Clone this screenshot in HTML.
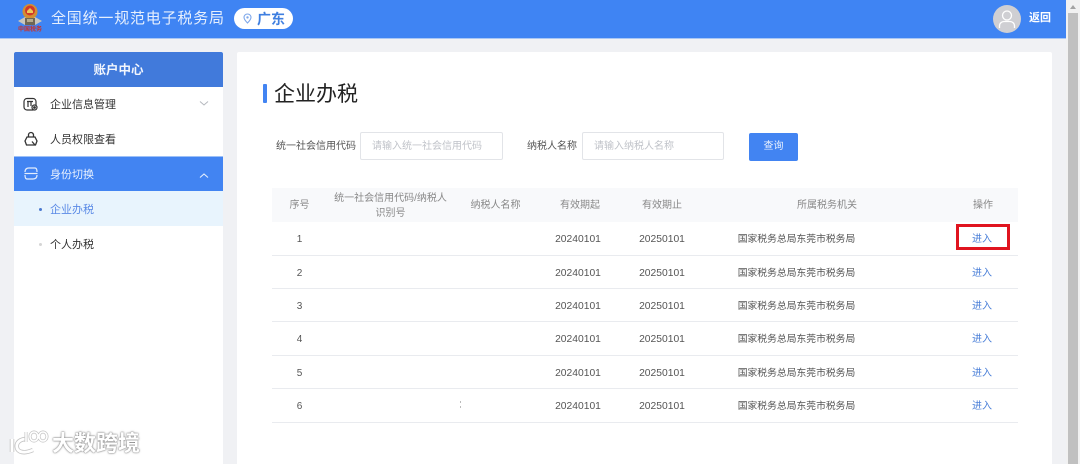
<!DOCTYPE html>
<html><head><meta charset="utf-8">
<style>
html,body{margin:0;padding:0;width:1080px;height:464px;overflow:hidden;background:#f0f1f4;font-family:"Liberation Sans","Noto Sans CJK SC",sans-serif;}
.a{position:absolute;white-space:nowrap;}
.c{text-align:center;}
#t div{position:absolute;white-space:nowrap;font-size:10px;line-height:14px;color:#555;text-align:center;}
#t div.h{color:#888;}
#t div.d{font-size:10.300px;margin-top:1px;}
#t div.b{font-size:9.800px;}
#t div.l{color:#4a7fd8;}
.line{position:absolute;left:272px;width:746px;height:1px;background:#e9ebef;}
#w{position:absolute;left:0;top:0;width:1080px;height:464px;filter:blur(.3px);}
</style></head><body>
<div id="w">
<div class="a" style="left:0;top:0;width:1066px;height:38px;background:#3f84f3;border-bottom:1px solid #a9c7f5;"></div>
<!-- logo -->
<svg class="a" style="left:17px;top:2px" width="26" height="26" viewBox="0 0 26 26">
<path d="M1 19 L8 15 L18 15 L25 19 L18 23 L8 23Z" fill="#c9c6bc"/>
<circle cx="13" cy="9.500" r="7.500" fill="#d28f33"/>
<circle cx="13" cy="8.500" r="5" fill="#d1372b"/>
<path d="M10 9l3-3 3 3v2h-6z" fill="#efc956"/>
<rect x="8" y="16" width="10" height="7" fill="#6f6754"/>
<rect x="10" y="17" width="6" height="3" fill="#b8ac8e"/>
</svg>
<div class="a c" style="left:17px;top:26px;width:26px;font-size:6px;line-height:8px;font-weight:bold;color:#c8322b;">中国税务</div>
<div class="a" style="left:51px;top:9px;font-size:15px;letter-spacing:.8px;line-height:20px;color:#e6effd;">全国统一规范电子税务局</div>
<div class="a" style="left:234px;top:8px;width:59px;height:21px;border-radius:11px;background:#fff;"></div>
<svg class="a" style="left:243px;top:13px" width="9" height="11" viewBox="0 0 9 11"><path d="M4.500 1C2.500 1 1 2.500 1 4.400 1 6.500 3 8.500 4.500 10 6 8.500 8 6.500 8 4.400 8 2.500 6.500 1 4.500 1Z" fill="none" stroke="#7da7ea" stroke-width="1.100"/><circle cx="4.500" cy="4.400" r="1.200" fill="#7da7ea"/></svg>
<div class="a" style="left:257px;top:10px;font-size:14px;line-height:18px;font-weight:bold;color:#3f7fe0;">广东</div>
<svg class="a" style="left:993px;top:5px" width="28" height="28" viewBox="0 0 28 28"><circle cx="14" cy="14" r="14" fill="#cfcfd3"/><circle cx="14" cy="10.500" r="4.500" fill="none" stroke="#fff" stroke-width="1.300"/><path d="M6.500 23v-2c0-3 2.500-4.500 4.500-4.500h6c2 0 4.500 1.500 4.500 4.500v2" fill="none" stroke="#fff" stroke-width="1.300"/></svg>
<div class="a" style="left:1029px;top:11px;font-size:11px;line-height:15px;font-weight:bold;color:#fff;">返回</div>
<!-- scrollbar -->
<div class="a" style="left:1066px;top:0;width:14px;height:464px;background:#f1f1f1;"></div>
<div class="a" style="left:1068px;top:13px;width:10px;height:451px;background:#c0c0c0;"></div>
<div class="a" style="left:1070px;top:5px;width:0;height:0;border-left:3px solid transparent;border-right:3px solid transparent;border-bottom:4px solid #a3a3a3;"></div>
<!-- sidebar -->
<div class="a" style="left:14px;top:52px;width:209px;height:412px;background:#fff;"></div>
<div class="a c" style="left:14px;top:52px;width:209px;height:35px;line-height:36px;background:#417adb;border-radius:2px 2px 0 0;color:#f2f6fd;font-size:12.500px;font-weight:bold;">账户中心</div>
<svg class="a" style="left:23px;top:97px" width="16" height="15" viewBox="0 0 16 15" fill="none" stroke="#333" stroke-width="1.200"><rect x="1" y="1.500" width="12" height="11.500" rx="3"/><path d="M5 5v5M8 5v4M4 4.500h6"/><circle cx="11.500" cy="10.500" r="2.500" fill="#fff"/><circle cx="11.500" cy="10.500" r=".8" fill="#333"/></svg>
<div class="a" style="left:50px;top:97px;font-size:11px;line-height:16px;color:#333;">企业信息管理</div>
<svg class="a" style="left:199px;top:100px" width="10" height="7" viewBox="0 0 10 7"><path d="M1 1.500L5 5 9 1.500" fill="none" stroke="#b5b8be" stroke-width="1"/></svg>
<svg class="a" style="left:23px;top:131px" width="16" height="16" viewBox="0 0 16 16" fill="none" stroke="#333" stroke-width="1.300"><path d="M5.500 6V4a2.500 2.500 0 0 1 5 0V6"/><path d="M4 6h8l2 4-1.500 4H3.500L2 10z"/><path d="M9 10.500l3 3.500"/></svg>
<div class="a" style="left:50px;top:132px;font-size:11px;line-height:16px;color:#333;">人员权限查看</div>
<div class="a" style="left:14px;top:156px;width:209px;height:35px;background:#4284f2;border-top:1px solid #9cc0f7;box-sizing:border-box;"></div>
<svg class="a" style="left:23px;top:166px" width="16" height="15" viewBox="0 0 16 15" fill="none" stroke="#e4eefd" stroke-width="1.200"><path d="M2 6C2 3 4 2 6 2h6c1.500 0 2 2 2 4"/><path d="M14 9c0 3-2 4-4 4H4c-1.500 0-2-2-2-4"/><path d="M1.500 7.500h13"/></svg>
<div class="a" style="left:50px;top:167px;font-size:11px;line-height:16px;color:#e9f1fe;">身份切换</div>
<svg class="a" style="left:199px;top:172px" width="10" height="7" viewBox="0 0 10 7"><path d="M1 5.500L5 2 9 5.500" fill="none" stroke="#e4eefd" stroke-width="1.100"/></svg>
<div class="a" style="left:14px;top:191px;width:209px;height:35px;background:#e8f4fd;"></div>
<div class="a" style="left:39px;top:208px;width:3px;height:3px;border-radius:50%;background:#4a78d0;"></div>
<div class="a" style="left:50px;top:202px;font-size:11px;line-height:16px;color:#5b8ae6;">企业办税</div>
<div class="a" style="left:39px;top:243px;width:3px;height:3px;border-radius:50%;background:#d5d5d5;"></div>
<div class="a" style="left:50px;top:237px;font-size:11px;line-height:16px;color:#333;">个人办税</div>
<!-- main panel -->
<div class="a" style="left:237px;top:52px;width:815px;height:412px;background:#fff;border-radius:2px 2px 0 0;"></div>
<div class="a" style="left:263px;top:84px;width:4px;height:19px;border-radius:1px;background:#4284f2;"></div>
<div class="a" style="left:274px;top:82px;font-size:21px;line-height:26px;color:#222;">企业办税</div>
<div class="a" style="left:276px;top:139px;font-size:10px;line-height:16px;color:#555;">统一社会信用代码</div>
<div class="a" style="left:360px;top:132px;width:143px;height:28px;box-sizing:border-box;border:1px solid #e2e4e8;border-radius:2px;background:#fff;"></div>
<div class="a" style="left:372px;top:139px;font-size:10px;line-height:16px;color:#c0c3c9;">请输入统一社会信用代码</div>
<div class="a" style="left:527px;top:139px;font-size:10px;line-height:16px;color:#555;">纳税人名称</div>
<div class="a" style="left:582px;top:132px;width:142px;height:28px;box-sizing:border-box;border:1px solid #e2e4e8;border-radius:2px;background:#fff;"></div>
<div class="a" style="left:594px;top:139px;font-size:10px;line-height:16px;color:#c0c3c9;">请输入纳税人名称</div>
<div class="a c" style="left:749px;top:133px;width:49px;height:28px;line-height:28px;border-radius:2px;background:#4284f2;color:#e9f1fe;font-size:10px;">查询</div>
<!-- table -->
<div class="a" style="left:272px;top:188px;width:746px;height:34px;background:#f8f9fb;"></div>
<div id="t">
<div class="h" style="left:272px;top:199px;width:55px;">序号</div>
<div class="h" style="left:327px;top:191px;width:127px;line-height:15px;">统一社会信用代码/纳税人<br>识别号</div>
<div class="h" style="left:460px;top:199px;width:71px;">纳税人名称</div>
<div class="h" style="left:545px;top:199px;width:70px;">有效期起</div>
<div class="h" style="left:627px;top:199px;width:70px;">有效期止</div>
<div class="h" style="left:767px;top:199px;width:120px;">所属税务机关</div>
<div class="h" style="left:953px;top:199px;width:60px;">操作</div>

<div style="left:272px;top:233px;width:55px;">1</div>
<div class="d" style="left:543px;top:232px;width:70px;">20240101</div>
<div class="d" style="left:627px;top:232px;width:70px;">20250101</div>
<div class="b" style="left:736.500px;top:233px;width:120px;">国家税务总局东莞市税务局</div>
<div class="l" style="left:952px;top:233px;width:60px;">进入</div>

<div style="left:272px;top:267px;width:55px;">2</div>
<div class="d" style="left:543px;top:266px;width:70px;">20240101</div>
<div class="d" style="left:627px;top:266px;width:70px;">20250101</div>
<div class="b" style="left:736.500px;top:267px;width:120px;">国家税务总局东莞市税务局</div>
<div class="l" style="left:952px;top:267px;width:60px;">进入</div>

<div style="left:272px;top:300px;width:55px;">3</div>
<div class="d" style="left:543px;top:299px;width:70px;">20240101</div>
<div class="d" style="left:627px;top:299px;width:70px;">20250101</div>
<div class="b" style="left:736.500px;top:300px;width:120px;">国家税务总局东莞市税务局</div>
<div class="l" style="left:952px;top:300px;width:60px;">进入</div>

<div style="left:272px;top:333px;width:55px;">4</div>
<div class="d" style="left:543px;top:332px;width:70px;">20240101</div>
<div class="d" style="left:627px;top:332px;width:70px;">20250101</div>
<div class="b" style="left:736.500px;top:333px;width:120px;">国家税务总局东莞市税务局</div>
<div class="l" style="left:952px;top:333px;width:60px;">进入</div>

<div style="left:272px;top:367px;width:55px;">5</div>
<div class="d" style="left:543px;top:366px;width:70px;">20240101</div>
<div class="d" style="left:627px;top:366px;width:70px;">20250101</div>
<div class="b" style="left:736.500px;top:367px;width:120px;">国家税务总局东莞市税务局</div>
<div class="l" style="left:952px;top:367px;width:60px;">进入</div>

<div style="left:272px;top:400px;width:55px;">6</div>
<div class="d" style="left:543px;top:399px;width:70px;">20240101</div>
<div class="d" style="left:627px;top:399px;width:70px;">20250101</div>
<div class="b" style="left:736.500px;top:400px;width:120px;">国家税务总局东莞市税务局</div>
<div class="l" style="left:952px;top:400px;width:60px;">进入</div>
</div>
<div class="a" style="left:460px;top:401px;width:1px;height:2px;background:#bbb;"></div>
<div class="a" style="left:460px;top:406px;width:1px;height:2px;background:#bbb;"></div>
<div class="line" style="top:255px"></div>
<div class="line" style="top:288px"></div>
<div class="line" style="top:321px"></div>
<div class="line" style="top:355px"></div>
<div class="line" style="top:388px"></div>
<div class="line" style="top:422px"></div>
<div class="a" style="left:956px;top:224px;width:54px;height:26px;box-sizing:border-box;border:3px solid #e0141f;"></div>
<!-- watermark -->
<svg class="a" style="left:8px;top:430px" width="44" height="28" viewBox="0 0 44 28" fill="none">
<g stroke="#c4c4c4" stroke-width="4.500">
<path d="M4 9V22"/>
<path d="M17 9C10 10 8 14 9 18c1 4 7 6 16 2"/>
</g>
<g stroke="#fff" stroke-width="2.800">
<path d="M4 9V22"/>
<path d="M17 9C10 10 8 14 9 18c1 4 7 6 16 2"/>
</g>
<g stroke="#c4c4c4" stroke-width="3">
<path d="M18 2v10"/><ellipse cx="26" cy="6.500" rx="4" ry="4.500"/><ellipse cx="35" cy="6.500" rx="4" ry="4.500"/>
</g>
<g stroke="#fff" stroke-width="1.600">
<path d="M18 2v10"/><ellipse cx="26" cy="6.500" rx="4" ry="4.500"/><ellipse cx="35" cy="6.500" rx="4" ry="4.500"/>
</g>
</svg>
<div class="a" style="left:52px;top:432px;font-size:22px;line-height:24px;font-weight:bold;color:#fff;text-shadow:0 0 2px #777,0 0 1px #777;">大数跨境</div>
</div>
</body></html>
